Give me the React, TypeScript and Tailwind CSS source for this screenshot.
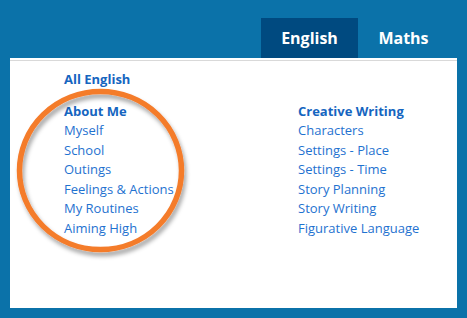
const aboutMe = ["Myself", "School", "Outings", "Feelings & Actions", "My Routines", "Aiming High"];
const creative = ["Characters", "Settings - Place", "Settings - Time", "Story Planning", "Story Writing", "Figurative Language"];

function Column({ title, items }: { title: string; items: string[] }) {
  return (
    <div className="flex flex-col">
      <a className="font-bold text-[#1565c0] leading-[19.5px]">{title}</a>
      {items.map((item) => (
        <a key={item} className="text-[#1f72d0] leading-[19.5px]">
          {item}
        </a>
      ))}
    </div>
  );
}

export default function App() {
  return (
    <div
      className="w-[467px] h-[318px] bg-[#0b72a9] flex flex-col pt-[18px] px-[10px] pb-[10px]"
      style={{ fontFamily: '"Open Sans", "DejaVu Sans", sans-serif' }}
    >
      <nav className="flex h-[40px] text-white font-bold text-[16px]">
        <div className="w-[251px]" />
        <a className="w-[97px] flex items-center justify-center bg-[#004a80]">English</a>
        <a className="w-[91px] flex items-center justify-center">Maths</a>
      </nav>
      <div className="relative flex-1 bg-white border-t-[2px] border-t-white">
        <div className="h-[1px] bg-[#d9d9d9]" />
        <div className="pl-[54px] pt-[9px] text-[13px]">
          <a className="block font-bold text-[#1565c0] leading-[19.5px]">All English</a>
          <div className="flex mt-[12px]">
            <div className="w-[234px]">
              <Column title="About Me" items={aboutMe} />
            </div>
            <Column title="Creative Writing" items={creative} />
          </div>
        </div>
        {/* annotation ring drawn over the menu */}
        <svg
          className="absolute left-0 top-0 pointer-events-none"
          width="447"
          height="250"
          viewBox="0 0 447 250"
        >
          <defs>
            <filter id="sh" x="-20%" y="-20%" width="140%" height="140%">
              <feDropShadow dx="2" dy="4" stdDeviation="2" floodColor="#000" floodOpacity="0.35" />
            </filter>
          </defs>
          <ellipse cx="90.5" cy="110.5" rx="81" ry="79" fill="none" stroke="#f47b2c" strokeWidth="5.5" filter="url(#sh)" />
        </svg>
      </div>
    </div>
  );
}
